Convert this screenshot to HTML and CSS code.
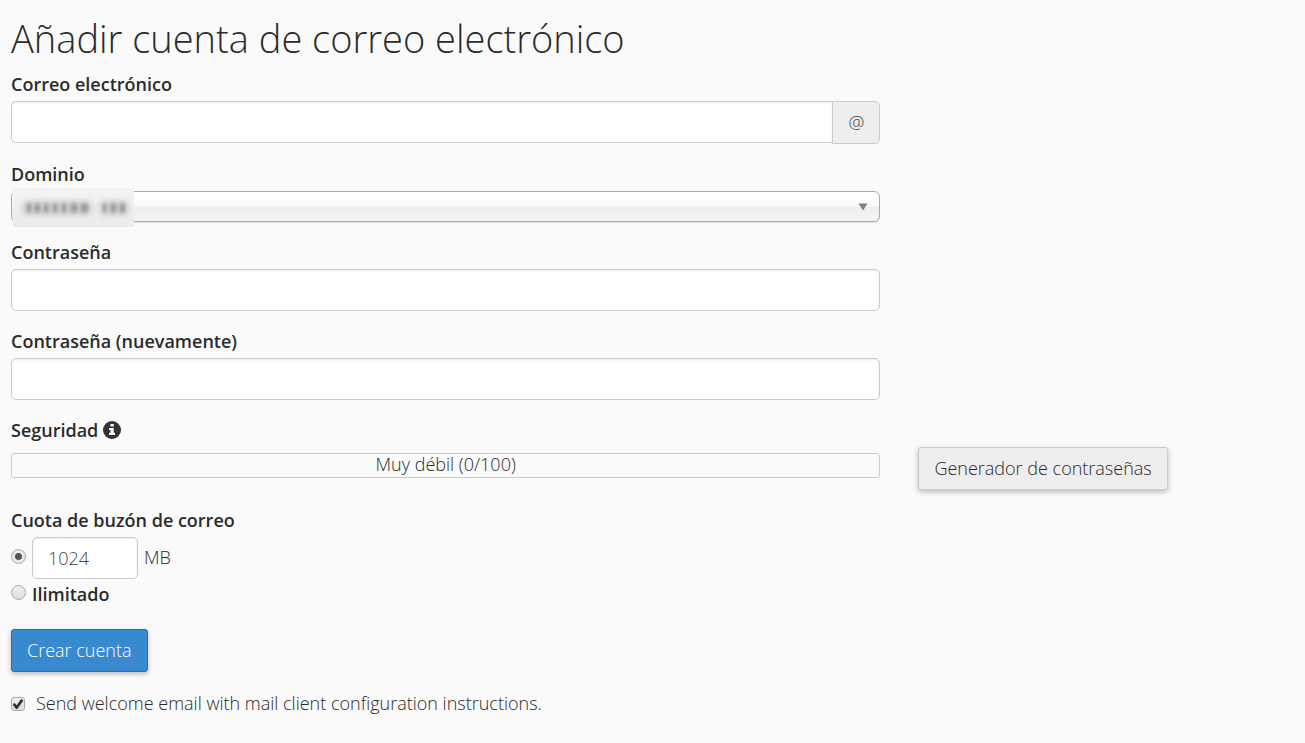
FILE: index.html
```
<!DOCTYPE html>
<html lang="es">
<head>
  <meta charset="UTF-8">
  <meta name="viewport" content="width=device-width, initial-scale=1">
  <title>Añadir cuenta de correo electrónico</title>
  <link rel="stylesheet" href="styles.css">
</head>
<body>
  <h1>Añadir cuenta de correo electrónico</h1>

  <form>
    <div class="row">
      <div class="form-group">
        <label for="email">Correo electrónico</label>
        <div class="input-group">
          <input type="text" id="email" class="form-control">
          <span class="input-group-addon">@</span>
        </div>
      </div>
    </div>

    <div class="row">
      <div class="form-group">
        <label for="domain">Dominio</label>
        <div class="select-wrap">
          <select id="domain" class="form-select">
            <option></option>
          </select>
          <svg class="arrow" width="10" height="8" viewBox="0 0 10 8"><path d="M0.5 0.5h9L5 7.5z" fill="#808080"/></svg>
          <!-- dominio oculto -->
          <svg class="mask" width="121" height="39" viewBox="0 0 121 39">
            <defs>
              <filter id="soft" x="-20%" y="-100%" width="140%" height="300%"><feGaussianBlur stdDeviation="3 3"/></filter>
              <filter id="grain" x="-20%" y="-100%" width="140%" height="300%"><feGaussianBlur stdDeviation="1.6 2.6"/></filter>
            </defs>
            <g filter="url(#soft)" fill="#c4c4c4">
              <rect x="10" y="14" width="68" height="12"/>
              <rect x="87" y="14" width="28" height="12"/>
            </g>
            <g filter="url(#grain)" fill="#999">
              <rect x="14" y="16" width="4" height="8"/>
              <rect x="22" y="16" width="5" height="8"/>
              <rect x="31" y="16" width="4" height="8"/>
              <rect x="40" y="16" width="4" height="8"/>
              <rect x="49" y="16" width="4" height="8"/>
              <rect x="58" y="16" width="6" height="8"/>
              <rect x="68" y="16" width="7" height="8"/>
              <rect x="90" y="16" width="3" height="8"/>
              <rect x="98" y="16" width="5" height="8"/>
              <rect x="107" y="16" width="5" height="8"/>
            </g>
          </svg>
        </div>
      </div>
    </div>

    <div class="row">
      <div class="form-group">
        <label for="password">Contraseña</label>
        <input type="password" id="password" class="form-control">
      </div>
    </div>

    <div class="row">
      <div class="form-group">
        <label for="password2">Contraseña (nuevamente)</label>
        <input type="password" id="password2" class="form-control">
      </div>
    </div>

    <div class="row">
      <div class="form-group">
        <div class="title">Seguridad
          <svg class="info" width="18" height="18" viewBox="0 0 18 18">
            <circle cx="9" cy="9" r="9" fill="#333"/>
            <path d="M7.5 3h3.2v2.4H7.5zM6 7h4.7v4.8H12V14H6v-2.2h1.5V9.1H6z" fill="#fff"/>
          </svg>
        </div>
        <div class="strength">Muy débil (0/100)</div>
      </div>
      <button type="button" class="btn btn-default">Generador de contraseñas</button>
    </div>

    <fieldset class="quota">
      <legend>Cuota de buzón de correo</legend>
      <div class="option">
        <input type="radio" name="quota" id="quotaMb" aria-label="MB" checked>
        <input type="text" id="quotaValue" class="form-control" value="1024">
        <label for="quotaValue" class="unit">MB</label>
      </div>
      <div class="option">
        <input type="radio" name="quota" id="quotaUnlimited">
        <label for="quotaUnlimited">Ilimitado</label>
      </div>
    </fieldset>

    <button type="submit" class="btn btn-primary">Crear cuenta</button>

    <div class="welcome">
      <input type="checkbox" id="welcome" checked>
      <label for="welcome">Send welcome email with mail client configuration instructions.</label>
    </div>
  </form>
</body>
</html>
```
FILE: styles.css
```
* {
  box-sizing: border-box;
}
body {
  margin: 0;
  padding: 12px 14px 24px 11px;
  background: #fafafa;
  color: #2b2b2b;
  font-family: "Open Sans", "Noto Sans", sans-serif;
  font-size: 18px;
  font-weight: 300;
  line-height: 26px;
}
h1 {
  margin: 0 0 7px;
  font-size: 38px;
  font-weight: 350;
  line-height: 52px;
}
.row {
  display: grid;
  grid-template-columns: 7fr 3fr;
  column-gap: 38px;
  align-items: end;
  margin-bottom: 17px;
}
.form-group label,
.title,
legend,
.option label {
  display: block;
  padding: 0;
  font-weight: 600;
}
.form-group label {
  margin-bottom: 4px;
}
.form-control {
  display: block;
  width: 100%;
  height: 42px;
  padding: 7px 15px 8px;
  background: #fff;
  border: 1px solid #ccc;
  border-radius: 5px;
  box-shadow: inset 0 1px 2px rgba(0, 0, 0, 0.08);
  color: #444;
  font: inherit;
}
.input-group {
  display: flex;
}
.input-group .form-control {
  flex: 1;
  border-right: 0;
  border-radius: 5px 0 0 5px;
}
.input-group-addon {
  width: 48px;
  height: 43px;
  background: #eee;
  border: 1px solid #ccc;
  border-radius: 0 5px 5px 0;
  color: #444;
  line-height: 40px;
  text-align: center;
}
.select-wrap {
  position: relative;
}
.form-select {
  appearance: none;
  display: block;
  width: 100%;
  height: 31px;
  background: linear-gradient(#fff 20%, #f6f6f6 50%, #eee 52%, #f4f4f4 100%);
  border: 1px solid #aaa;
  border-radius: 6px;
  box-shadow: 0 1px 1px rgba(0, 0, 0, 0.1);
  font: inherit;
}
.arrow {
  position: absolute;
  top: 12px;
  right: 12px;
  pointer-events: none;
}
.mask {
  position: absolute;
  top: -3px;
  left: 2px;
  background: linear-gradient(#f4f4f4, #ebebeb);
  pointer-events: none;
}
.title {
  display: flex;
  align-items: center;
  gap: 5px;
  margin-bottom: 10px;
}
.strength {
  height: 25px;
  margin-bottom: 12px;
  border: 1px solid #ccc;
  border-radius: 3px;
  line-height: 21px;
  text-align: center;
}
.btn {
  height: 43px;
  padding: 0 15px 2px;
  border: 1px solid #ccc;
  border-radius: 3px;
  box-shadow: 0 2px 5px rgba(0, 0, 0, 0.26);
  font: inherit;
  justify-self: start;
  cursor: pointer;
}
.btn-default {
  background: #eee;
  color: #2b2b2b;
}
.btn-primary {
  background: #3889cf;
  border-color: #2a6fb0;
  color: #fff;
  font-weight: 350;
}
.quota {
  margin: 0 0 20px;
  padding: 0;
  border: 0;
}
legend {
  margin-bottom: 4px;
}
.option {
  display: flex;
  align-items: center;
  gap: 6px;
  margin-bottom: 2px;
}
.option .form-control {
  width: 106px;
}
.option .unit {
  padding-bottom: 3px;
  font-weight: 300;
}
input[type="radio"] {
  appearance: none;
  flex: none;
  width: 15px;
  height: 15px;
  margin: 0 0 4px;
  background: linear-gradient(#eee, #ddd);
  border: 1px solid #aaa;
  border-radius: 50%;
}
input[type="radio"]:checked {
  background: radial-gradient(circle, #555 3px, #e8e8e8 4px);
}
input[type="checkbox"] {
  appearance: none;
  display: grid;
  place-items: center;
  flex: none;
  width: 14px;
  height: 14px;
  margin: 2px 0 0;
  background: linear-gradient(#eee, #ddd);
  border: 1px solid #aaa;
  border-radius: 3px;
}
input[type="checkbox"]:checked::before {
  content: "";
  width: 11px;
  height: 10px;
  background: #333;
  clip-path: polygon(0 54%, 18% 40%, 38% 62%, 78% 0, 100% 14%, 44% 100%, 32% 100%);
}
.welcome {
  display: flex;
  align-items: center;
  gap: 11px;
  margin-top: 18px;
  font-weight: 350;
}
```
